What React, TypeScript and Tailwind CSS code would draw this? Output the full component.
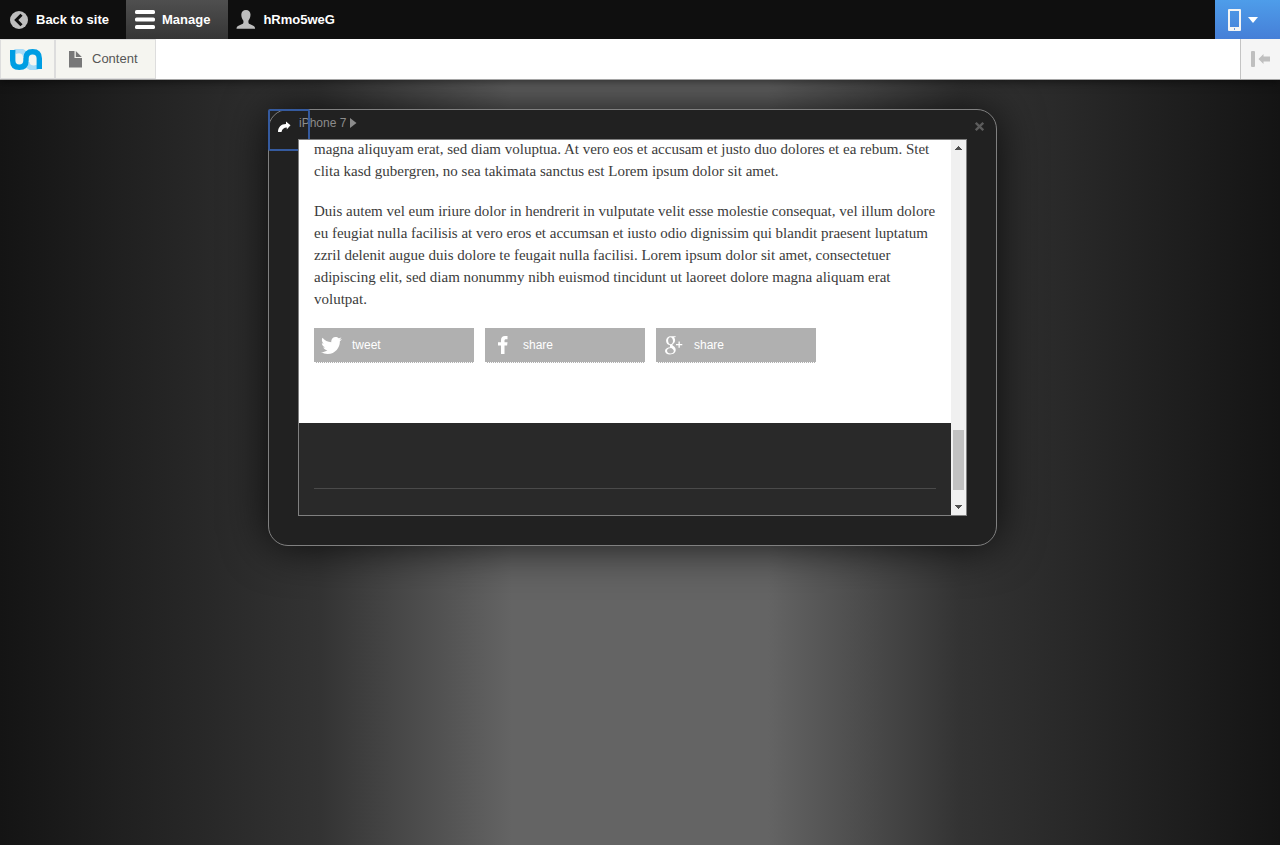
import React from "react";
import { FaTwitter } from "react-icons/fa";

function BackIcon() {
  return (
    <svg width="18" height="18" viewBox="0 0 18 18" aria-hidden="true">
      <circle cx="9" cy="9" r="9" fill="#bebebe" />
      <path d="M11.500 3.800 6.300 9l5.200 5.200" fill="none" stroke="#0f0f0f" strokeWidth="3" />
    </svg>
  );
}

function MenuIcon() {
  return (
    <svg width="20" height="20" viewBox="0 0 20 20" fill="#fff" aria-hidden="true">
      <rect y="0" width="20" height="4" rx="1.600" />
      <rect y="7.500" width="20" height="4" rx="1.600" />
      <rect y="15" width="20" height="4" rx="1.600" />
    </svg>
  );
}

function UserIcon() {
  return (
    <svg width="20" height="20" viewBox="0 0 20 20" fill="#bebebe" aria-hidden="true">
      <path d="M10 0C7.300 0 5.300 1.800 5.300 4.500c0 2.200.7 4.500 2 5.900.5 2 0 3.100-1.100 3.700l-3.700 1.700C1.100 16.400.5 17.300.5 18.700h18.600c0-1.400-.6-2.300-1.800-2.900l-3.600-1.700c-1.100-.6-1.500-1.700-1.200-3.700 1.300-1.400 2-3.700 2-5.900C14.500 1.800 12.700 0 10 0z" />
    </svg>
  );
}

function PhoneIcon() {
  return (
    <svg width="13" height="22" viewBox="0 0 13 22" aria-hidden="true">
      <path fillRule="evenodd" fill="#f4f4f4" d="M1 0h11a1 1 0 0 1 1 1v20a1 1 0 0 1-1 1H1a1 1 0 0 1-1-1V1a1 1 0 0 1 1-1zm1 2v16h9V2H2z" />
      <rect x="6" y="19" width="1" height="2" fill="#6b9be0" />
    </svg>
  );
}

function Logo() {
  return (
    <svg width="32" height="21" viewBox="0 0 32 21" fill="none" aria-hidden="true">
      <path d="M5 2.600c5-1.800 10.500-.6 10.500 5.400M17 13c0 5.500 5.500 7 10.500 5" stroke="#a6dbf8" strokeWidth="5" />
      <path d="M2.700 1v10.500c0 4.500 2.200 6.800 6.600 6.800s6.700-2.300 6.700-6.800V9.500c0-4.500 2.200-6.800 6.600-6.800s6.700 2.300 6.700 6.800V20" stroke="#009ee3" strokeWidth="5.400" />
    </svg>
  );
}

function FileIcon() {
  return (
    <svg width="13" height="17" viewBox="0 0 13 17" fill="#787878" aria-hidden="true">
      <path d="M0 0h5.500v7H13v9.500H0z" />
      <path d="M6.800 0l6 6h-6z" />
    </svg>
  );
}

function FacebookIcon() {
  return (
    <svg className="ml-1.5" width="10" height="18" viewBox="0 0 10 18" fill="#fff" aria-hidden="true">
      <path d="M9.500 0v3.200H8C6.900 3.200 6.500 3.700 6.500 4.700v1.600h3l-.4 3.200H6.500V18H3V9.500H0V6.300h3V4C3 1.400 4.500 0 7 0z" />
    </svg>
  );
}

function GooglePlusIcon() {
  return (
    <svg className="ml-0.5" width="18" height="19" viewBox="0 0 18 19" fill="#fff" aria-hidden="true">
      <path
        fillRule="evenodd"
        d="M11 .3H5.800C3.200.3 1.100 2.300 1.100 4.900c0 2.300 1.700 4 4 4.100-.4.900-.3 1.500.3 2.200C2.200 11.300 0 12.900 0 15c0 2 2 3.400 4.900 3.400 3.500 0 5.800-1.900 5.800-4.400 0-1.700-.8-2.800-2.300-3.900-1.300-1-1.100-1.500-.1-2.300 1.200-1 1.800-2 1.800-3.500 0-1.300-.5-2.300-1.300-3h1.300zM5.300 1.200c1.500 0 2.600 1.700 2.700 3.800 0 2-1 3.200-2.200 3.200-1.600 0-2.700-1.600-2.700-3.800 0-1.900.9-3.200 2.200-3.200zm.9 10.800c1.700 1 2.600 1.700 2.600 3.100s-1.200 2.400-3.300 2.400-3.500-1.100-3.500-2.700c0-1.700 1.600-2.800 4.200-2.800z"
      />
      <path d="M13.500 5.500h1.300V8h2.500v1.300h-2.500v2.500h-1.300V9.300H11V8h2.500z" />
    </svg>
  );
}

function ShareButton({ icon, label }: { icon: React.ReactNode; label: string }) {
  return (
    <a href="#share" className="flex h-[35px] w-40 items-center border-b border-dotted border-white bg-[#b0b0b0] font-['Liberation_Sans',sans-serif] text-xs text-white">
      <span className="flex w-[38px] shrink-0 pl-[7px]">{icon}</span>
      {label}
    </a>
  );
}

function Scrollbar() {
  return (
    <div className="flex w-[15px] shrink-0 flex-col items-center bg-[#f0f0f0]" aria-hidden="true">
      <svg className="mt-1.5" width="7" height="4" viewBox="0 0 7 4" fill="#505050" shapeRendering="crispEdges">
        <path d="M3 0h1v1h1v1h1v1h1v1H0V3h1V2h1V1h1z" />
      </svg>
      <div className="mt-auto mb-[15px] h-[60px] w-[11px] bg-[#c1c1c1]" />
      <svg className="mb-1.5" width="7" height="4" viewBox="0 0 7 4" fill="#505050" shapeRendering="crispEdges">
        <path d="M0 0h7v1H6v1H5v1H4v1H3V3H2V2H1V1H0z" />
      </svg>
    </div>
  );
}

export default function App() {
  return (
    <div className="flex min-h-screen flex-col bg-[#141414] font-['Liberation_Sans',sans-serif]">
      <nav className="z-20 flex h-[39px] bg-[#0f0f0f] text-[13px] font-bold text-white" aria-label="Toolbar">
        <a href="#site" className="flex items-center gap-2 pr-[17px] pl-2.5">
          <BackIcon />
          Back to site
        </a>
        <button type="button" className="flex items-center gap-[7px] bg-linear-to-b from-[#4f4f4f] to-[#363636] pr-[18px] pl-[9px]">
          <MenuIcon />
          Manage
        </button>
        <button type="button" className="flex items-center gap-[7px] pl-2">
          <UserIcon />
          hRmo5weG
        </button>
        <button type="button" aria-label="Layout preview" className="ml-auto flex w-[65px] items-center gap-[7px] bg-linear-to-b from-[#4e9dea] to-[#467fd7] pl-[13px]">
          <PhoneIcon />
          <svg width="10" height="6" viewBox="0 0 10 6" fill="#fff" aria-hidden="true">
            <path d="M0 0h10L5 6z" />
          </svg>
        </button>
      </nav>

      <div className="z-10 flex h-[41px] border-b border-[#a5a5a5] bg-white text-[13px] text-[#565656] shadow-[0_2px_8px_rgba(0,0,0,0.5)]">
        <a href="#home" aria-label="Home" className="flex w-[55px] items-center border border-[#dddddd] bg-[#f5f5f0] pl-[9px]">
          <Logo />
        </a>
        <a href="#content" className="flex items-center gap-2.5 border border-[#dddddd] bg-[#f5f5f0] pr-[17px] pl-[13px]">
          <FileIcon />
          Content
        </a>
        <button type="button" aria-label="Vertical orientation" className="ml-auto flex w-10 items-center border-l border-[#c4c4c4] bg-[#f5f5f5] pl-2.5">
          <svg width="19" height="16" viewBox="0 0 19 16" fill="#bfbfbf" aria-hidden="true">
            <rect width="4" height="16" rx="1" />
            <path d="M7.500 8l5-5v2.500H19v5h-6.500V13z" />
          </svg>
        </button>
      </div>

      <main className="flex flex-1 items-start justify-center bg-[linear-gradient(to_right,#141414_0%,#333333_25%,#646464_40%,#646464_60%,#333333_75%,#141414_100%)] pt-[29px] pr-[15px]">
        <section className="relative w-[729px] rounded-[20px] border border-[#808080] bg-[#212121] px-[29px] pb-[29px] shadow-[0_0_45px_rgba(0,0,0,0.8)]">
          <header className="flex h-[29px] items-start pt-[5px] pl-px text-xs text-[#8c8c8c]">
            <button type="button" className="flex items-center gap-1">
              iPhone 7
              <svg width="7" height="10" viewBox="0 0 7 10" fill="#8c8c8c" aria-hidden="true">
                <path d="M0 0l6.500 5L0 10z" />
              </svg>
            </button>
          </header>
          <button type="button" aria-label="Rotate" className="absolute -top-px -left-px flex h-[42px] w-[42px] items-center rounded-[2px] border-2 border-[#355a9e] pb-1.5 pl-2">
            <svg width="13" height="12" viewBox="0 0 13 12" fill="#fff" aria-hidden="true">
              <path d="M8 0.500l4.500 3.800L8.800 8.500V6.500C6 6.500 4 8 3.500 11H0C0 6.500 3 3 8 3z" />
            </svg>
          </button>
          <button type="button" aria-label="Close" className="absolute top-3 right-3 text-[#5c5c5c]">
            <svg width="9" height="9" viewBox="0 0 9 9" fill="none" stroke="currentColor" strokeWidth="2.300" aria-hidden="true">
              <path d="M.8.800l7.400 7.400M8.200.800L.8 8.200" />
            </svg>
          </button>
          <div className="relative flex h-[377px] border border-[#808080] bg-white">
            <div className="flex min-w-0 flex-1 flex-col justify-end overflow-hidden">
              <article className="px-[15px] pb-[60px] font-['Liberation_Serif',serif] text-[15px] leading-[22px] text-[#3b3b3b]">
                <p>
                  magna aliquyam erat, sed diam voluptua. At vero eos et accusam et justo duo dolores et ea rebum. Stet clita kasd gubergren, no sea takimata sanctus est Lorem ipsum dolor sit amet.
                </p>
                <p className="mt-[18px]">
                  Duis autem vel eum iriure dolor in hendrerit in vulputate velit esse molestie consequat, vel illum dolore eu feugiat nulla facilisis at vero eros et accumsan et iusto odio dignissim qui blandit praesent luptatum zzril delenit augue duis dolore te feugait nulla facilisi. Lorem ipsum dolor sit amet, consectetuer adipiscing elit, sed diam nonummy nibh euismod tincidunt ut laoreet dolore magna aliquam erat volutpat.
                </p>
                <div className="mt-[18px] flex gap-[11px]">
                  <ShareButton icon={<FaTwitter size={21} />} label="tweet" />
                  <ShareButton icon={<FacebookIcon />} label="share" />
                  <ShareButton icon={<GooglePlusIcon />} label="share" />
                </div>
              </article>
              <footer className="h-[92px] shrink-0 bg-[#292929] px-[15px] pt-[65px]">
                <hr className="border-[#4a4a4a]" />
              </footer>
            </div>
            <Scrollbar />
          </div>
        </section>
      </main>
    </div>
  );
}
